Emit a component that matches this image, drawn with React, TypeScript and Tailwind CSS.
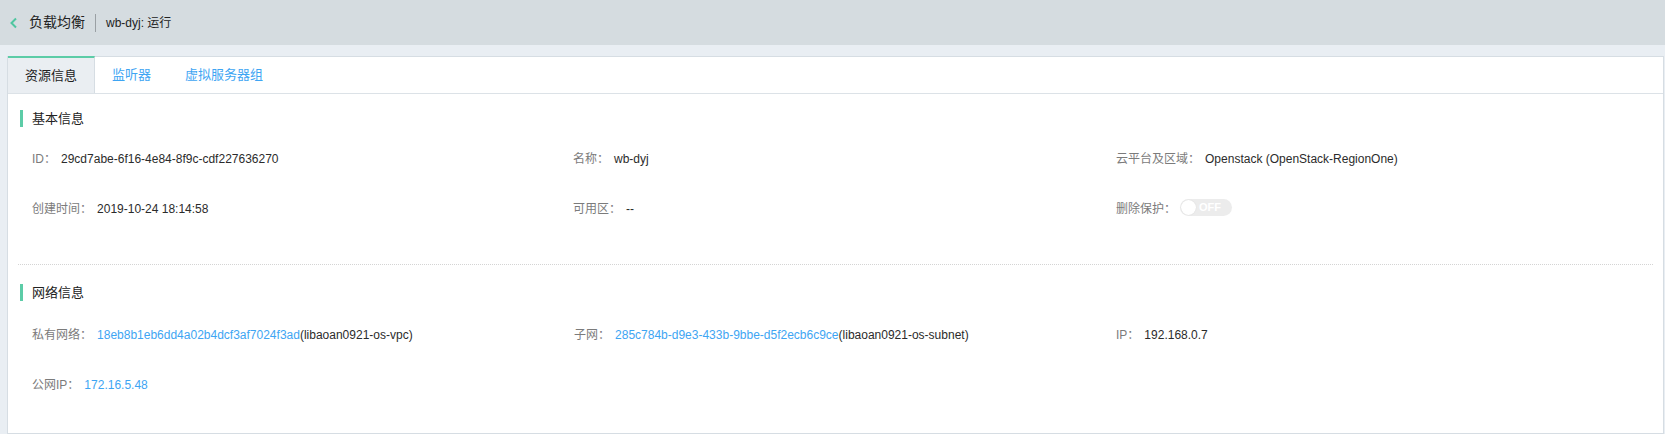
import React from "react";

const font = {
  fontFamily: '"Liberation Sans", Arial, "Noto Sans CJK SC", sans-serif',
};

function Field({
  label,
  children,
}: {
  label: string;
  children: React.ReactNode;
}) {
  return (
    <div className="flex items-center h-[20px] text-[12px] whitespace-nowrap">
      <span className="text-[#7b7b7b]">{label}：</span>
      <span className="ml-[5px] text-[#2b2b2b] flex items-center">{children}</span>
    </div>
  );
}

function SectionTitle({ title }: { title: string }) {
  return (
    <div className="ml-[12px] flex items-center h-[17px] border-l-[3px] border-[#5ccca7]">
      <span className="pl-[9px] text-[13px] text-[#222]">{title}</span>
    </div>
  );
}

function Link({ children }: { children: React.ReactNode }) {
  return <span className="text-[#3ea5f3]">{children}</span>;
}

function OffSwitch() {
  return (
    <span className="relative inline-flex items-center w-[52px] h-[17px] rounded-full bg-[#ececec]">
      <span className="ml-[1px] w-[15px] h-[15px] rounded-full bg-white shadow-[0_0_1px_#ccc]" />
      <span className="ml-[3px] text-[11px] text-white font-bold leading-none">OFF</span>
    </span>
  );
}

export default function App() {
  return (
    <div className="w-[1665px] h-[434px] overflow-hidden bg-[#e9eef3]" style={font}>
      {/* header */}
      <div className="h-[45px] bg-[#d5dce0] flex items-center pl-[9px]">
        <svg width="9" height="12" viewBox="0 0 9 12" className="mr-[11px]">
          <path d="M7 1.5 L2.5 6 L7 10.5" fill="none" stroke="#4fc6a0" strokeWidth="2" />
        </svg>
        <span className="text-[14px] text-[#222]">负载均衡</span>
        <span className="mx-[10px] w-px h-[18px] bg-[#9aa0a4]" />
        <span className="text-[12px] text-[#222]">wb-dyj: 运行</span>
      </div>

      {/* card */}
      <div className="mt-[11px] ml-[7px] w-[1657px] h-[378px] bg-white border border-[#d6dde3]">
        {/* tabs */}
        <div className="flex h-[37px] border-b border-[#dce2e7] text-[13px]">
          <div className="-mt-px w-[87px] h-[37px] flex items-center justify-center bg-[#eaeef2] border-t-2 border-[#5ccca7] border-r border-r-[#d6dde3] text-[#222]">
            资源信息
          </div>
          <div className="px-[17px] flex items-center text-[#3ea5f3]">监听器</div>
          <div className="px-[17px] flex items-center text-[#3ea5f3]">虚拟服务器组</div>
        </div>

        {/* basic info */}
        <div className="pt-[16px]">
          <SectionTitle title="基本信息" />
          <div className="pl-[24px] grid grid-cols-[541px_543px_1fr] mt-[22px] gap-y-[30px]">
            <Field label="ID">29cd7abe-6f16-4e84-8f9c-cdf227636270</Field>
            <Field label="名称">wb-dyj</Field>
            <Field label="云平台及区域">Openstack (OpenStack-RegionOne)</Field>
            <Field label="创建时间">2019-10-24 18:14:58</Field>
            <Field label="可用区">--</Field>
            <Field label="删除保护">
              <span className="-ml-px">
                <OffSwitch />
              </span>
            </Field>
          </div>
        </div>

        <div className="mt-[45px] mx-[10px] border-t border-dotted border-[#d4d4d4]" />

        {/* network info */}
        <div className="pt-[19px]">
          <SectionTitle title="网络信息" />
          <div className="pl-[24px] grid grid-cols-[542px_542px_1fr] mt-[24px] gap-y-[30px]">
            <Field label="私有网络">
              <Link>18eb8b1eb6dd4a02b4dcf3af7024f3ad</Link>(libaoan0921-os-vpc)
            </Field>
            <Field label="子网">
              <Link>285c784b-d9e3-433b-9bbe-d5f2ecb6c9ce</Link>(libaoan0921-os-subnet)
            </Field>
            <Field label="IP">192.168.0.7</Field>
            <Field label="公网IP">
              <Link>172.16.5.48</Link>
            </Field>
          </div>
        </div>
      </div>
    </div>
  );
}
